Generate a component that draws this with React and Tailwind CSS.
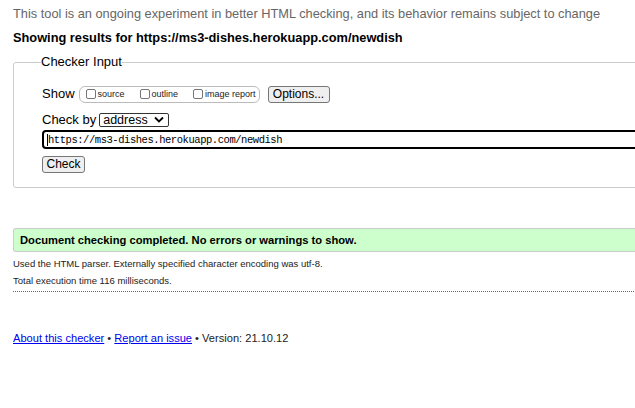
import React from "react"

function Checkbox({ label }) {
	return (
		<label className="flex items-center whitespace-nowrap">
			<span className="inline-block w-[10px] h-[10px] border border-[#767676] rounded-[2px] bg-white mr-[2px]"></span>
			<span className="text-[9px] text-[#222] leading-[11px]">{label}</span>
		</label>
	)
}

function App() {
	return (
		<div className="w-[635px] h-[408px] overflow-hidden bg-white" style={{ fontFamily: '"Liberation Sans", Arial, sans-serif' }}>
			<div className="w-[700px] pl-[13px] pt-[6px]">
				{/* intro */}
				<p className="text-[12.8px] text-[#666] leading-[16px] whitespace-nowrap">
					This tool is an ongoing experiment in better HTML checking, and its behavior remains subject to change
				</p>
				<p className="mt-[8px] text-[12.8px] font-bold text-black leading-[16px] whitespace-nowrap">
					Showing results for https://ms3-dishes.herokuapp.com/newdish
				</p>

				{/* Checker Input */}
				<fieldset className="mt-[8px] border border-[#ccc] rounded-[3px] pl-[28px] pb-[12px] pt-[15px]">
					<legend className="px-0 -ml-[1px] text-[13px] text-black leading-[16px]">Checker Input</legend>

					<div className="flex items-center h-[18px] text-[13px]">
						<span className="mr-[4px]">Show</span>
						<div className="flex items-center gap-[15px] h-[17px] w-[181px] border border-[#bbb] rounded-[6px] pl-[6px]">
							<Checkbox label="source" />
							<Checkbox label="outline" />
							<Checkbox label="image report" />
						</div>
						<button className="ml-[8px] h-[17px] w-[62px] border border-[#767676] rounded-[3px] bg-[#efefef] text-[12px] leading-[15px] whitespace-nowrap">
							Options...
						</button>
					</div>

					<div className="flex items-center mt-[9px] h-[15px] text-[13px]">
						<span className="mr-[3px]">Check by</span>
						<div className="flex items-center justify-between h-[14px] w-[70px] border border-[#333] rounded-[2px] pl-[3px] pr-[4px] leading-[12px]">
							<span className="text-[12.5px]">address</span>
							<svg width="10" height="7" viewBox="0 0 10 7">
								<path d="M1 1.5 L5 5.5 L9 1.5" fill="none" stroke="#000" strokeWidth="1.8" />
							</svg>
						</div>
					</div>

					<div className="mt-[3px] h-[19px] border-2 border-black rounded-l-[4px] flex items-center pl-[3px]">
						<span className="w-[1px] h-[12px] bg-black"></span>
						<span className="text-[10.5px] tracking-[-0.45px] text-black leading-[14px]" style={{ fontFamily: '"Liberation Mono", "Courier New", monospace' }}>
							https://ms3-dishes.herokuapp.com/newdish
						</span>
					</div>

					<button className="mt-[7px] h-[17px] w-[43px] border border-[#767676] rounded-[3px] bg-[#efefef] text-[12px] leading-[15px]">
						Check
					</button>
				</fieldset>

				{/* Result banner */}
				<div className="mt-[40px] h-[24px] bg-[#ccffcc] border-y border-l border-[#ccc] rounded-l-[3px] flex items-center pl-[6px]">
					<span className="text-[11.2px] font-bold text-black">
						Document checking completed. No errors or warnings to show.
					</span>
				</div>

				<p className="mt-[5px] text-[9.5px] text-[#222] leading-[13px]">
					Used the HTML parser. Externally specified character encoding was utf-8.
				</p>
				<p className="mt-[4px] text-[9.5px] text-[#222] leading-[13px]">
					Total execution time 116 milliseconds.
				</p>
				<div className="mt-[4px] border-t border-dotted border-[#666]"></div>

				{/* Footer */}
				<p className="mt-[38px] text-[11.1px] text-[#222] leading-[16px]">
					<a href="#" className="text-[#0000ee] underline">About this checker</a>
					{" • "}
					<a href="#" className="text-[#0000ee] underline">Report an issue</a>
					{" • Version: 21.10.12"}
				</p>
			</div>
		</div>
	)
}

export default App;
